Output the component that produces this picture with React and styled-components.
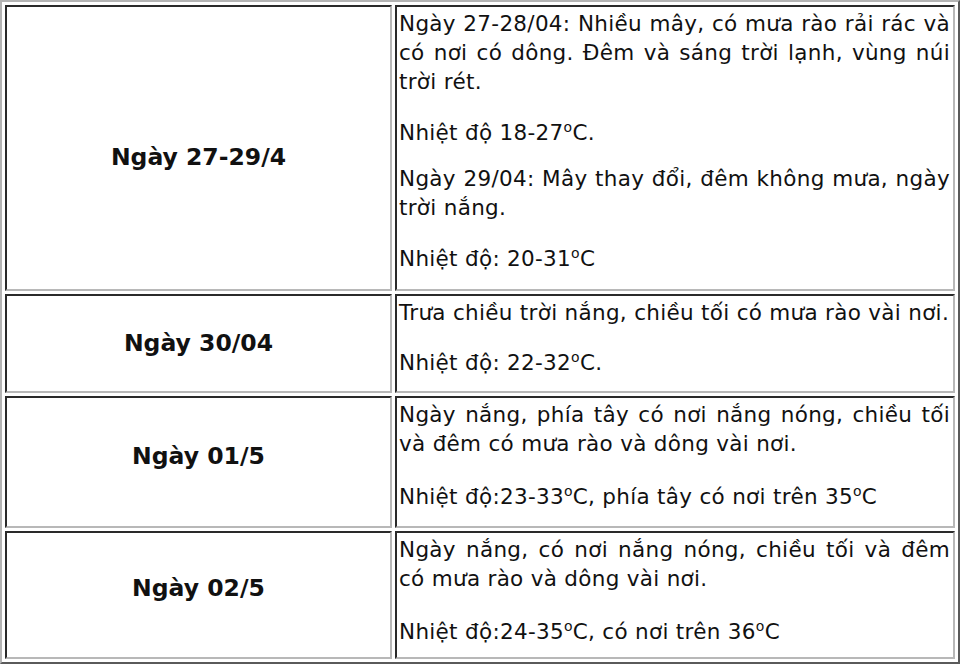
import React from "react";
import styled, { createGlobalStyle } from "styled-components";

const Global = createGlobalStyle`
  html, body { margin: 0; padding: 0; background: #fff; }
  body { width: 960px; height: 664px; overflow: hidden; }
`;

const Table = styled.table`
  width: 960px;
  height: 664px;
  border-collapse: separate;
  border-spacing: 3px;
  border-style: solid;
  border-width: 2px;
  border-color: #b4b4b4 #5a5a5a #5a5a5a #b4b4b4;
  font-family: "DejaVu Sans", sans-serif;
  color: #111;
  table-layout: fixed;
`;

const Row = styled.tr`
  height: ${(p) => p.$h}px;
`;

const Cell = styled.td`
  border-style: solid;
  border-width: 2px;
  border-color: #2a2a2a #b8b8b8 #b8b8b8 #2a2a2a;
  padding: 2px 3px 0 2px;
  vertical-align: top;
  font-size: 21.5px;
  letter-spacing: 0.3px;
  line-height: 29px;
  text-align: justify;
`;

const DateCell = styled(Cell)`
  width: 383px;
  vertical-align: middle;
  text-align: center;
  font-weight: bold;
  font-size: 23.5px;
  letter-spacing: 0;
  padding: ${(p) => (p.$shift > 0 ? `${p.$shift * 2}px 0 0` : `0 0 ${-p.$shift * 2}px`)};
`;

const Para = styled.p`
  margin: 0 0 ${(p) => p.$mb ?? 22}px;
  &:last-child { margin-bottom: 0; }
`;

const Deg = styled.sup`
  font-size: 14px;
  line-height: 0;
  vertical-align: 8px;
`;

const T = ({ v }) => (
  <>
    {v}
    <Deg>o</Deg>C
  </>
);

const rows = [
  {
    h: 281,
    shift: 9,
    date: "Ngày 27-29/4",
    gaps: [22, 17, 22],
    paras: [
      "Ngày 27-28/04: Nhiều mây, có mưa rào rải rác và có nơi có dông. Đêm và sáng trời lạnh, vùng núi trời rét.",
      <>Nhiệt độ 18-<T v="27" />.</>,
      "Ngày 29/04: Mây thay đổi, đêm không mưa, ngày trời nắng.",
      <>Nhiệt độ: 20-<T v="31" /></>,
    ],
  },
  {
    h: 97,
    shift: 0,
    date: "Ngày 30/04",
    gaps: [21],
    paras: [
      "Trưa chiều trời nắng, chiều tối có mưa rào vài nơi.",
      <>Nhiệt độ: 22-<T v="32" />.</>,
    ],
  },
  {
    h: 129,
    shift: -5,
    date: "Ngày 01/5",
    gaps: [24],
    paras: [
      "Ngày nắng, phía tây có nơi nắng nóng, chiều tối và đêm có mưa rào và dông vài nơi.",
      <>Nhiệt độ:23-<T v="33" />, phía tây có nơi trên <T v="35" /></>,
    ],
  },
  {
    h: 126,
    shift: -6,
    date: "Ngày 02/5",
    gaps: [24],
    paras: [
      "Ngày nắng, có nơi nắng nóng, chiều tối và đêm có mưa rào và dông vài nơi.",
      <>Nhiệt độ:24-<T v="35" />, có nơi trên <T v="36" /></>,
    ],
  },
];

export default function App() {
  return (
    <>
      <Global />
      <Table>
        <tbody>
          {rows.map((r, i) => (
            <Row key={i} $h={r.h}>
              <DateCell $shift={r.shift}>{r.date}</DateCell>
              <Cell>
                {r.paras.map((p, j) => (
                  <Para key={j} $mb={r.gaps[j]}>{p}</Para>
                ))}
              </Cell>
            </Row>
          ))}
        </tbody>
      </Table>
    </>
  );
}
